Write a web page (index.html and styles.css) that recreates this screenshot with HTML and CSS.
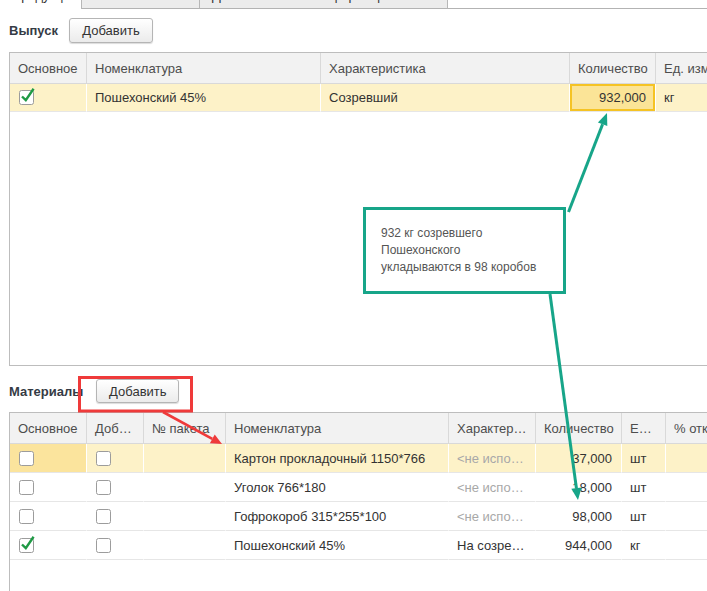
FILE: index.html
```html
<!DOCTYPE html>
<html lang="ru">
<head>
<meta charset="utf-8">
<title>Выпуск и материалы</title>
<link rel="stylesheet" href="styles.css">
</head>
<body>
<div class="page">
  <div class="tabs">
    <div class="tab tab-active"><span class="tab-text">Продукция</span></div>
    <div class="tab tab-2"><span class="tab-text">Упаковка</span></div>
    <div class="tab tab-3"><span class="tab-text">Дополнительная информация</span></div>
    <div class="tab-fill"></div>
  </div>

  <div class="toolbar toolbar-out">
    <span class="label">Выпуск</span>
    <button class="btn">Добавить</button>
  </div>

  <div class="grid grid-out">
    <div class="row row-head">
      <div class="hcell">Основное</div>
      <div class="hcell">Номенклатура</div>
      <div class="hcell">Характеристика</div>
      <div class="hcell">Количество</div>
      <div class="hcell">Ед. изм.</div>
    </div>
    <div class="row row-sel">
      <div class="cell"><svg class="cb" viewBox="0 0 18 18" width="18" height="18"><rect x="0.5" y="3.5" width="14" height="14" rx="2" fill="#fff" stroke="#9c9c9c"/><path d="M3 9.5 L6.8 13.2 L14.6 1.8" fill="none" stroke="#1f9a45" stroke-width="2.4"/></svg></div>
      <div class="cell">Пошехонский 45%</div>
      <div class="cell">Созревший</div>
      <div class="cell num active">932,000</div>
      <div class="cell">кг</div>
    </div>
  </div>

  <div class="toolbar toolbar-mat">
    <span class="label">Материалы</span>
    <button class="btn btn-sm">Добавить</button>
  </div>

  <div class="grid grid-mat">
    <div class="row row-head">
      <div class="hcell">Основное</div>
      <div class="hcell">Доб…</div>
      <div class="hcell">№ пакета</div>
      <div class="hcell">Номенклатура</div>
      <div class="hcell">Характер…</div>
      <div class="hcell">Количество</div>
      <div class="hcell">Е…</div>
      <div class="hcell">% отклонения</div>
    </div>
    <div class="row row-sel">
      <div class="cell cell-cur"><svg class="cb" viewBox="0 0 18 18" width="18" height="18"><rect x="0.5" y="3.5" width="14" height="14" rx="2" fill="#fff" stroke="#9c9c9c"/></svg></div>
      <div class="cell"><svg class="cb" viewBox="0 0 18 18" width="18" height="18"><rect x="0.5" y="3.5" width="14" height="14" rx="2" fill="#fff" stroke="#9c9c9c"/></svg></div>
      <div class="cell"></div>
      <div class="cell">Картон прокладочный 1150*766</div>
      <div class="cell muted">&lt;не испо…</div>
      <div class="cell num">37,000</div>
      <div class="cell">шт</div>
      <div class="cell"></div>
    </div>
    <div class="row">
      <div class="cell"><svg class="cb" viewBox="0 0 18 18" width="18" height="18"><rect x="0.5" y="3.5" width="14" height="14" rx="2" fill="#fff" stroke="#9c9c9c"/></svg></div>
      <div class="cell"><svg class="cb" viewBox="0 0 18 18" width="18" height="18"><rect x="0.5" y="3.5" width="14" height="14" rx="2" fill="#fff" stroke="#9c9c9c"/></svg></div>
      <div class="cell"></div>
      <div class="cell">Уголок 766*180</div>
      <div class="cell muted">&lt;не испо…</div>
      <div class="cell num">18,000</div>
      <div class="cell">шт</div>
      <div class="cell"></div>
    </div>
    <div class="row">
      <div class="cell"><svg class="cb" viewBox="0 0 18 18" width="18" height="18"><rect x="0.5" y="3.5" width="14" height="14" rx="2" fill="#fff" stroke="#9c9c9c"/></svg></div>
      <div class="cell"><svg class="cb" viewBox="0 0 18 18" width="18" height="18"><rect x="0.5" y="3.5" width="14" height="14" rx="2" fill="#fff" stroke="#9c9c9c"/></svg></div>
      <div class="cell"></div>
      <div class="cell">Гофрокороб 315*255*100</div>
      <div class="cell muted">&lt;не испо…</div>
      <div class="cell num">98,000</div>
      <div class="cell">шт</div>
      <div class="cell"></div>
    </div>
    <div class="row">
      <div class="cell"><svg class="cb" viewBox="0 0 18 18" width="18" height="18"><rect x="0.5" y="3.5" width="14" height="14" rx="2" fill="#fff" stroke="#9c9c9c"/><path d="M3 9.5 L6.8 13.2 L14.6 1.8" fill="none" stroke="#1f9a45" stroke-width="2.4"/></svg></div>
      <div class="cell"><svg class="cb" viewBox="0 0 18 18" width="18" height="18"><rect x="0.5" y="3.5" width="14" height="14" rx="2" fill="#fff" stroke="#9c9c9c"/></svg></div>
      <div class="cell"></div>
      <div class="cell">Пошехонский 45%</div>
      <div class="cell">На созре…</div>
      <div class="cell num">944,000</div>
      <div class="cell">кг</div>
      <div class="cell"></div>
    </div>
  </div>

  <div class="note">932 кг созревшего<br>Пошехонского<br>укладываются в 98 коробов</div>

  <svg class="overlay" width="707" height="591" viewBox="0 0 707 591">
    <rect x="79.5" y="377.5" width="112" height="33.5" fill="none" stroke="#ef3a3a" stroke-width="3"/>
    <line x1="163" y1="412" x2="212.3" y2="438.8" stroke="#ef3a3a" stroke-width="2.6"/>
    <polygon points="222,444 209.9,443.2 214.7,434.4" fill="#ef3a3a"/>
    <line x1="568.5" y1="212" x2="602.6" y2="124.2" stroke="#17a589" stroke-width="3"/>
    <polygon points="607,113 607.3,126 597.9,122.4" fill="#17a589"/>
    <line x1="550" y1="294" x2="576.4" y2="488.1" stroke="#17a589" stroke-width="3"/>
    <polygon points="578,500 581.6,487.4 571.3,488.8" fill="#17a589"/>
  </svg>
</div>
</body>
</html>
```

FILE: styles.css
```css
html, body {
  margin: 0;
  padding: 0;
  background: #fff;
}

body {
  width: 707px;
  height: 591px;
  overflow: hidden;
  font-family: "Liberation Sans", Arial, sans-serif;
  font-size: 13px;
  color: #333;
}

.page {
  position: relative;
  width: 707px;
  height: 591px;
  overflow: hidden;
}

/* Tabs (cut off at the top) */
.tabs {
  display: flex;
  height: 9px;
  overflow: hidden;
}

.tab {
  box-sizing: border-box;
  height: 9px;
  overflow: hidden;
  border-right: 1px solid #b7b7b7;
  flex: none;
}

.tab-active {
  width: 82px;
  background: #fff;
}

.tab-2 {
  width: 118px;
  background: #ececec;
  border-bottom: 1px solid #b3b3b3;
}

.tab-3 {
  width: 248px;
  background: #ececec;
  border-bottom: 1px solid #b3b3b3;
}

.tab-fill {
  flex: 1;
  border-bottom: 1px solid #b3b3b3;
}

.tab-text {
  display: block;
  margin-top: -11px;
  padding-left: 12px;
  line-height: 13px;
  white-space: nowrap;
  color: #333;
}

/* Toolbars */
.toolbar {
  display: flex;
  align-items: center;
  margin-left: 9px;
}

.toolbar-out {
  margin-top: 9px;
  margin-bottom: 9px;
  height: 25px;
  gap: 11px;
}

.toolbar-mat {
  margin-top: 13px;
  margin-bottom: 9px;
  height: 24px;
  gap: 13px;
}

.label {
  font-weight: bold;
  font-size: 13px;
  color: #353b45;
}

.btn {
  box-sizing: border-box;
  width: 84px;
  height: 25px;
  padding: 0;
  border: 1px solid #b5b5b5;
  border-radius: 3px;
  background: linear-gradient(#ffffff, #ebebeb);
  box-shadow: 0 1px 1px rgba(0, 0, 0, 0.14);
  font-family: "Liberation Sans", Arial, sans-serif;
  font-size: 13px;
  color: #333;
}

.btn-sm {
  width: 83px;
  height: 24px;
}

/* Grids */
.grid {
  box-sizing: border-box;
  margin-left: 9px;
  border-left: 1px solid #bdbdbd;
  border-top: 1px solid #bdbdbd;
  overflow: hidden;
}

.grid-out {
  height: 314px;
  border-bottom: 1px solid #bdbdbd;
}

.grid-mat {
  height: 300px;
}

.row {
  display: grid;
}

.grid-out .row {
  grid-template-columns: 77px 234px 249px 86px 140px;
}

.grid-mat .row {
  grid-template-columns: 77px 57px 82px 223px 87px 86px 44px 140px;
}

.hcell {
  box-sizing: border-box;
  height: 31px;
  display: flex;
  align-items: center;
  padding: 0 8px;
  background: #f2f2f2;
  border-right: 1px solid #d9d9d9;
  border-bottom: 1px solid #d9d9d9;
  color: #4d4d4d;
  white-space: nowrap;
  overflow: hidden;
}

.cell {
  box-sizing: border-box;
  height: 29px;
  display: flex;
  align-items: center;
  padding: 0 8px;
  border-right: 1px solid #fff;
  border-bottom: 1px solid #e6e6e6;
  color: #333;
  white-space: nowrap;
  overflow: hidden;
}

.grid-out .cell {
  height: 28px;
}

.row-sel .cell {
  background: #fdf2c8;
}

.row-sel .cell-cur {
  background: #fbe49d;
}

.cell.num {
  justify-content: flex-end;
  padding-right: 9px;
}

.row-sel .cell.active {
  background: #fbe497;
  box-shadow: inset 0 0 0 2px #f5c324;
}

.cell.muted {
  color: #a8a8a8;
}

.cb {
  display: block;
  margin-left: 1px;
  margin-top: -3px;
  overflow: visible;
}

/* Annotations overlay */
.note {
  position: absolute;
  left: 363px;
  top: 207px;
  box-sizing: border-box;
  width: 203px;
  height: 87px;
  border: 3px solid #17a589;
  background: #fff;
  padding: 15px 0 0 15px;
  font-size: 12px;
  line-height: 17px;
  color: #555;
  z-index: 2;
}

.overlay {
  position: absolute;
  left: 0;
  top: 0;
  z-index: 3;
  pointer-events: none;
}
```
